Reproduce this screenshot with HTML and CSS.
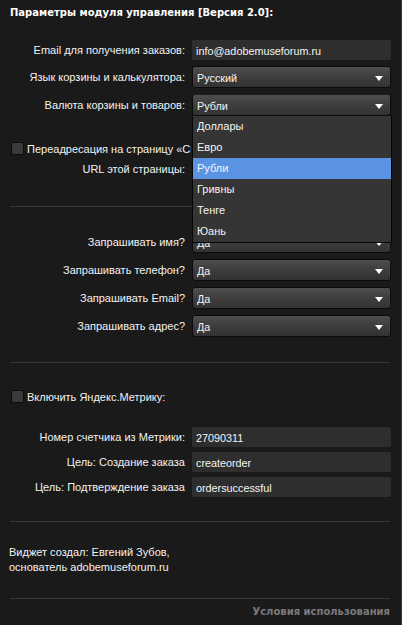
FILE: index.html
```html
<!DOCTYPE html>
<html lang="ru">
<head>
<meta charset="utf-8">
<title>Параметры модуля управления</title>
<link rel="stylesheet" href="styles.css">
</head>
<body>
<div class="panel">
  <h1 class="title">Параметры модуля управления [Версия 2.0]:</h1>

  <div class="group g-main">
    <div class="row"><span class="lbl">Email для получения заказов:</span><div class="field input">info@adobemuseforum.ru</div></div>
    <div class="row"><span class="lbl">Язык корзины и калькулятора:</span><div class="field select"><span>Русский</span><span class="arrow"></span></div></div>
    <div class="row"><span class="lbl">Валюта корзины и товаров:</span>
      <div class="field select open"><span>Рубли</span><span class="arrow"></span>
        <ul class="dropdown">
          <li>Доллары</li>
          <li>Евро</li>
          <li class="active">Рубли</li>
          <li>Гривны</li>
          <li>Тенге</li>
          <li>Юань</li>
        </ul>
      </div>
    </div>
  </div>

  <div class="check c-redirect"><span class="box"></span><span class="check-text">Переадресация на страницу «Спасибо»</span></div>
  <div class="row r-url"><span class="lbl">URL этой страницы:</span><div class="field input"></div></div>

  <div class="sep s1"></div>

  <div class="group g-ask">
    <div class="row"><span class="lbl">Запрашивать имя?</span><div class="field select"><span>Да</span><span class="arrow"></span></div></div>
    <div class="row"><span class="lbl">Запрашивать телефон?</span><div class="field select"><span>Да</span><span class="arrow"></span></div></div>
    <div class="row"><span class="lbl">Запрашивать Email?</span><div class="field select"><span>Да</span><span class="arrow"></span></div></div>
    <div class="row"><span class="lbl">Запрашивать адрес?</span><div class="field select"><span>Да</span><span class="arrow"></span></div></div>
  </div>

  <div class="sep s2"></div>

  <div class="check c-metrika"><span class="box"></span><span>Включить Яндекс.Метрику:</span></div>

  <div class="group g-metrika">
    <div class="row"><span class="lbl">Номер счетчика из Метрики:</span><div class="field input">27090311</div></div>
    <div class="row"><span class="lbl">Цель: Создание заказа</span><div class="field input">createorder</div></div>
    <div class="row"><span class="lbl">Цель: Подтверждение заказа</span><div class="field input">ordersuccessful</div></div>
  </div>

  <div class="sep s3"></div>

  <p class="author">Виджет создал: Евгений Зубов,<br>основатель adobemuseforum.ru</p>

  <div class="sep s4"></div>

  <div class="terms">Условия использования</div>
</div>
</body>
</html>
```

FILE: styles.css
```css
* { box-sizing: border-box; }

html, body {
  margin: 0;
  padding: 0;
  background: #1a1a1a;
}

body {
  font-family: "Liberation Sans", Arial, sans-serif;
  font-size: 11px;
  color: #f2f2f2;
}

.panel {
  width: 402px;
  height: 625px;
  padding: 6px 11px 0 10px;
  border-right: 1px solid #3a3a3a;
  display: flex;
  flex-direction: column;
  overflow: hidden;
}

.title {
  margin: 0;
  font-family: "DejaVu Sans", Verdana, sans-serif;
  font-size: 10px;
  font-weight: bold;
  line-height: 14px;
  color: #ffffff;
}

.group {
  display: flex;
  flex-direction: column;
}

.g-main { margin-top: 20px; gap: 5px; }
.g-main .row + .row { margin-top: 1px; }

.row {
  display: grid;
  grid-template-columns: 175px 199px;
  column-gap: 7px;
  align-items: center;
}

.lbl {
  text-align: right;
  white-space: nowrap;
  line-height: 14px;
}

.field {
  position: relative;
  display: flex;
  align-items: center;
  padding: 0 4px;
  font-size: 10.8px;
  color: #f4f4f4;
  white-space: nowrap;
}

.input {
  height: 20px;
  background: #2e2e2e;
  border-radius: 2px;
  padding-top: 1px;
}

.select {
  height: 22px;
  border: 1px solid #0b0b0b;
  border-radius: 3px;
  background:
    repeating-linear-gradient(90deg, rgba(255,255,255,0.03) 0 1px, transparent 1px 2px),
    linear-gradient(#4b4b4b, #3c3c3c 45%, #2f2f2f);
  padding-top: 2px;
}

.select.open { border-top-color: #1f1f1f; }

.arrow {
  position: absolute;
  right: 7px;
  top: 9px;
  width: 0;
  height: 0;
  border-left: 4px solid transparent;
  border-right: 4px solid transparent;
  border-top: 5px solid #ffffff;
}

.dropdown {
  position: absolute;
  z-index: 5;
  left: -1px;
  top: 21px;
  width: 200px;
  margin: 0;
  padding: 0;
  list-style: none;
  background: #353535;
  border: 1px solid #050505;
  border-top: none;
}

.dropdown li {
  height: 21px;
  line-height: 21px;
  padding-left: 4px;
  font-size: 11px;
  color: #f4f4f4;
}

.dropdown li.active {
  background: #5a93e2;
}

.check {
  display: flex;
  align-items: center;
  gap: 3px;
  height: 13px;
  line-height: 14px;
  white-space: nowrap;
}

.check-text {
  max-width: 164px;
  overflow: hidden;
}

.box {
  flex: none;
  width: 13px;
  height: 13px;
  margin-left: 1px;
  background: #3a3a3a;
  border: 1px solid #0c0c0c;
  border-radius: 2px;
}

.c-redirect { margin-top: 26px; }
.r-url { margin-top: 4px; }

.sep {
  height: 1px;
  background: #383838;
  flex: none;
}

.s1 { margin-top: 27px; }

.g-ask { margin-top: 24px; gap: 6px; }

.s2 { margin-top: 25px; }

.c-metrika { margin-top: 27px; }

.g-metrika { margin-top: 24px; gap: 5px; }

.s3 { margin-top: 24px; }

.author {
  margin: 23px 0 0 -1px;
  line-height: 15px;
}

.s4 { margin-top: 23px; }

.terms {
  margin-top: 6px;
  text-align: right;
  font-family: "DejaVu Sans", Verdana, sans-serif;
  font-size: 10px;
  font-weight: bold;
  line-height: 14px;
  color: #7a7a7a;
}
```
